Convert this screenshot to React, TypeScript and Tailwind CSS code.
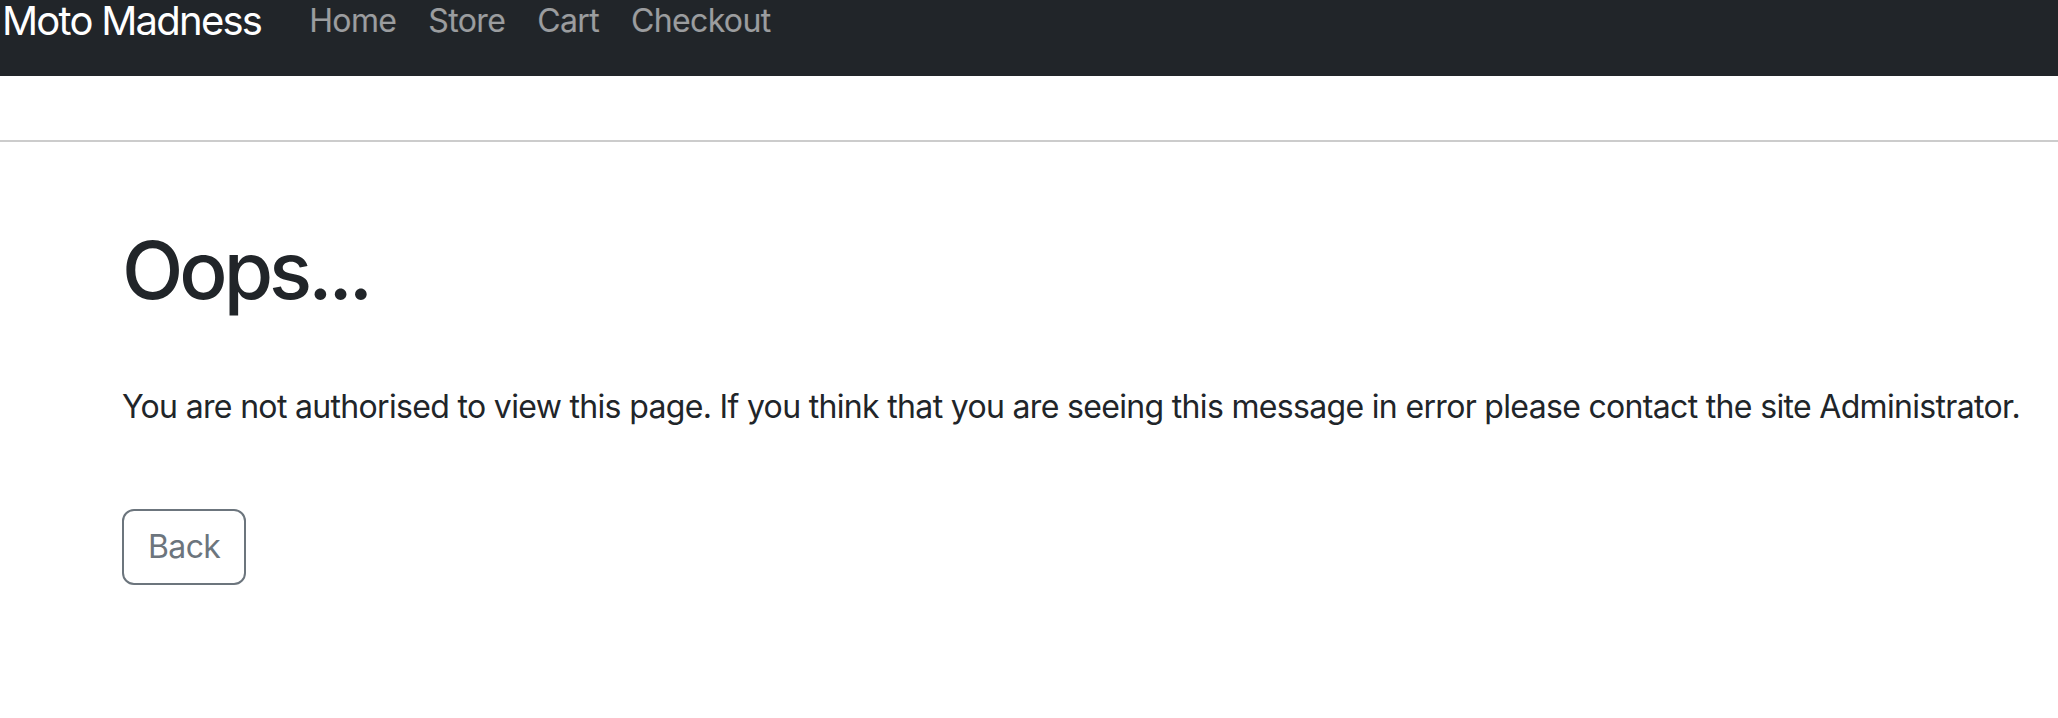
export default function App() {
  const links = ["Home", "Store", "Cart", "Checkout"];

  return (
    <div className="min-h-[718px] bg-white font-['Inter',sans-serif] text-[#212529]">
      <nav className="flex h-[76px] items-start bg-[#212529]">
        <a className="ml-[2px] mr-[32px] text-[40px] leading-[42px] tracking-[-0.044em] text-white">Moto Madness</a>
        <ul className="flex">
          {links.map((link) => (
            <li key={link}>
              <a className="block px-[16px] text-[32px] leading-[42px] tracking-[-0.02em] text-white/55">{link}</a>
            </li>
          ))}
        </ul>
      </nav>

      <hr className="mt-[64px] border-t-2 border-[#cccccc]" />

      <main className="px-[122px] pt-[80px]">
        <h1 className="text-[80px] font-medium leading-[96px] tracking-[-0.05em]">Oops...</h1>
        <p className="mt-[65px] whitespace-nowrap text-[32px] leading-[48px] tracking-[-0.021em]">
          You are not authorised to view this page. If you think that you are seeing this message in error please
          contact the site Administrator.
        </p>
        <button
          type="button"
          className="mt-[78px] rounded-[12px] border-2 border-[#6c757d] px-[24px] py-[12px] text-[32px] leading-[48px] tracking-[-0.02em] text-[#6c757d]"
        >
          Back
        </button>
      </main>
    </div>
  );
}
